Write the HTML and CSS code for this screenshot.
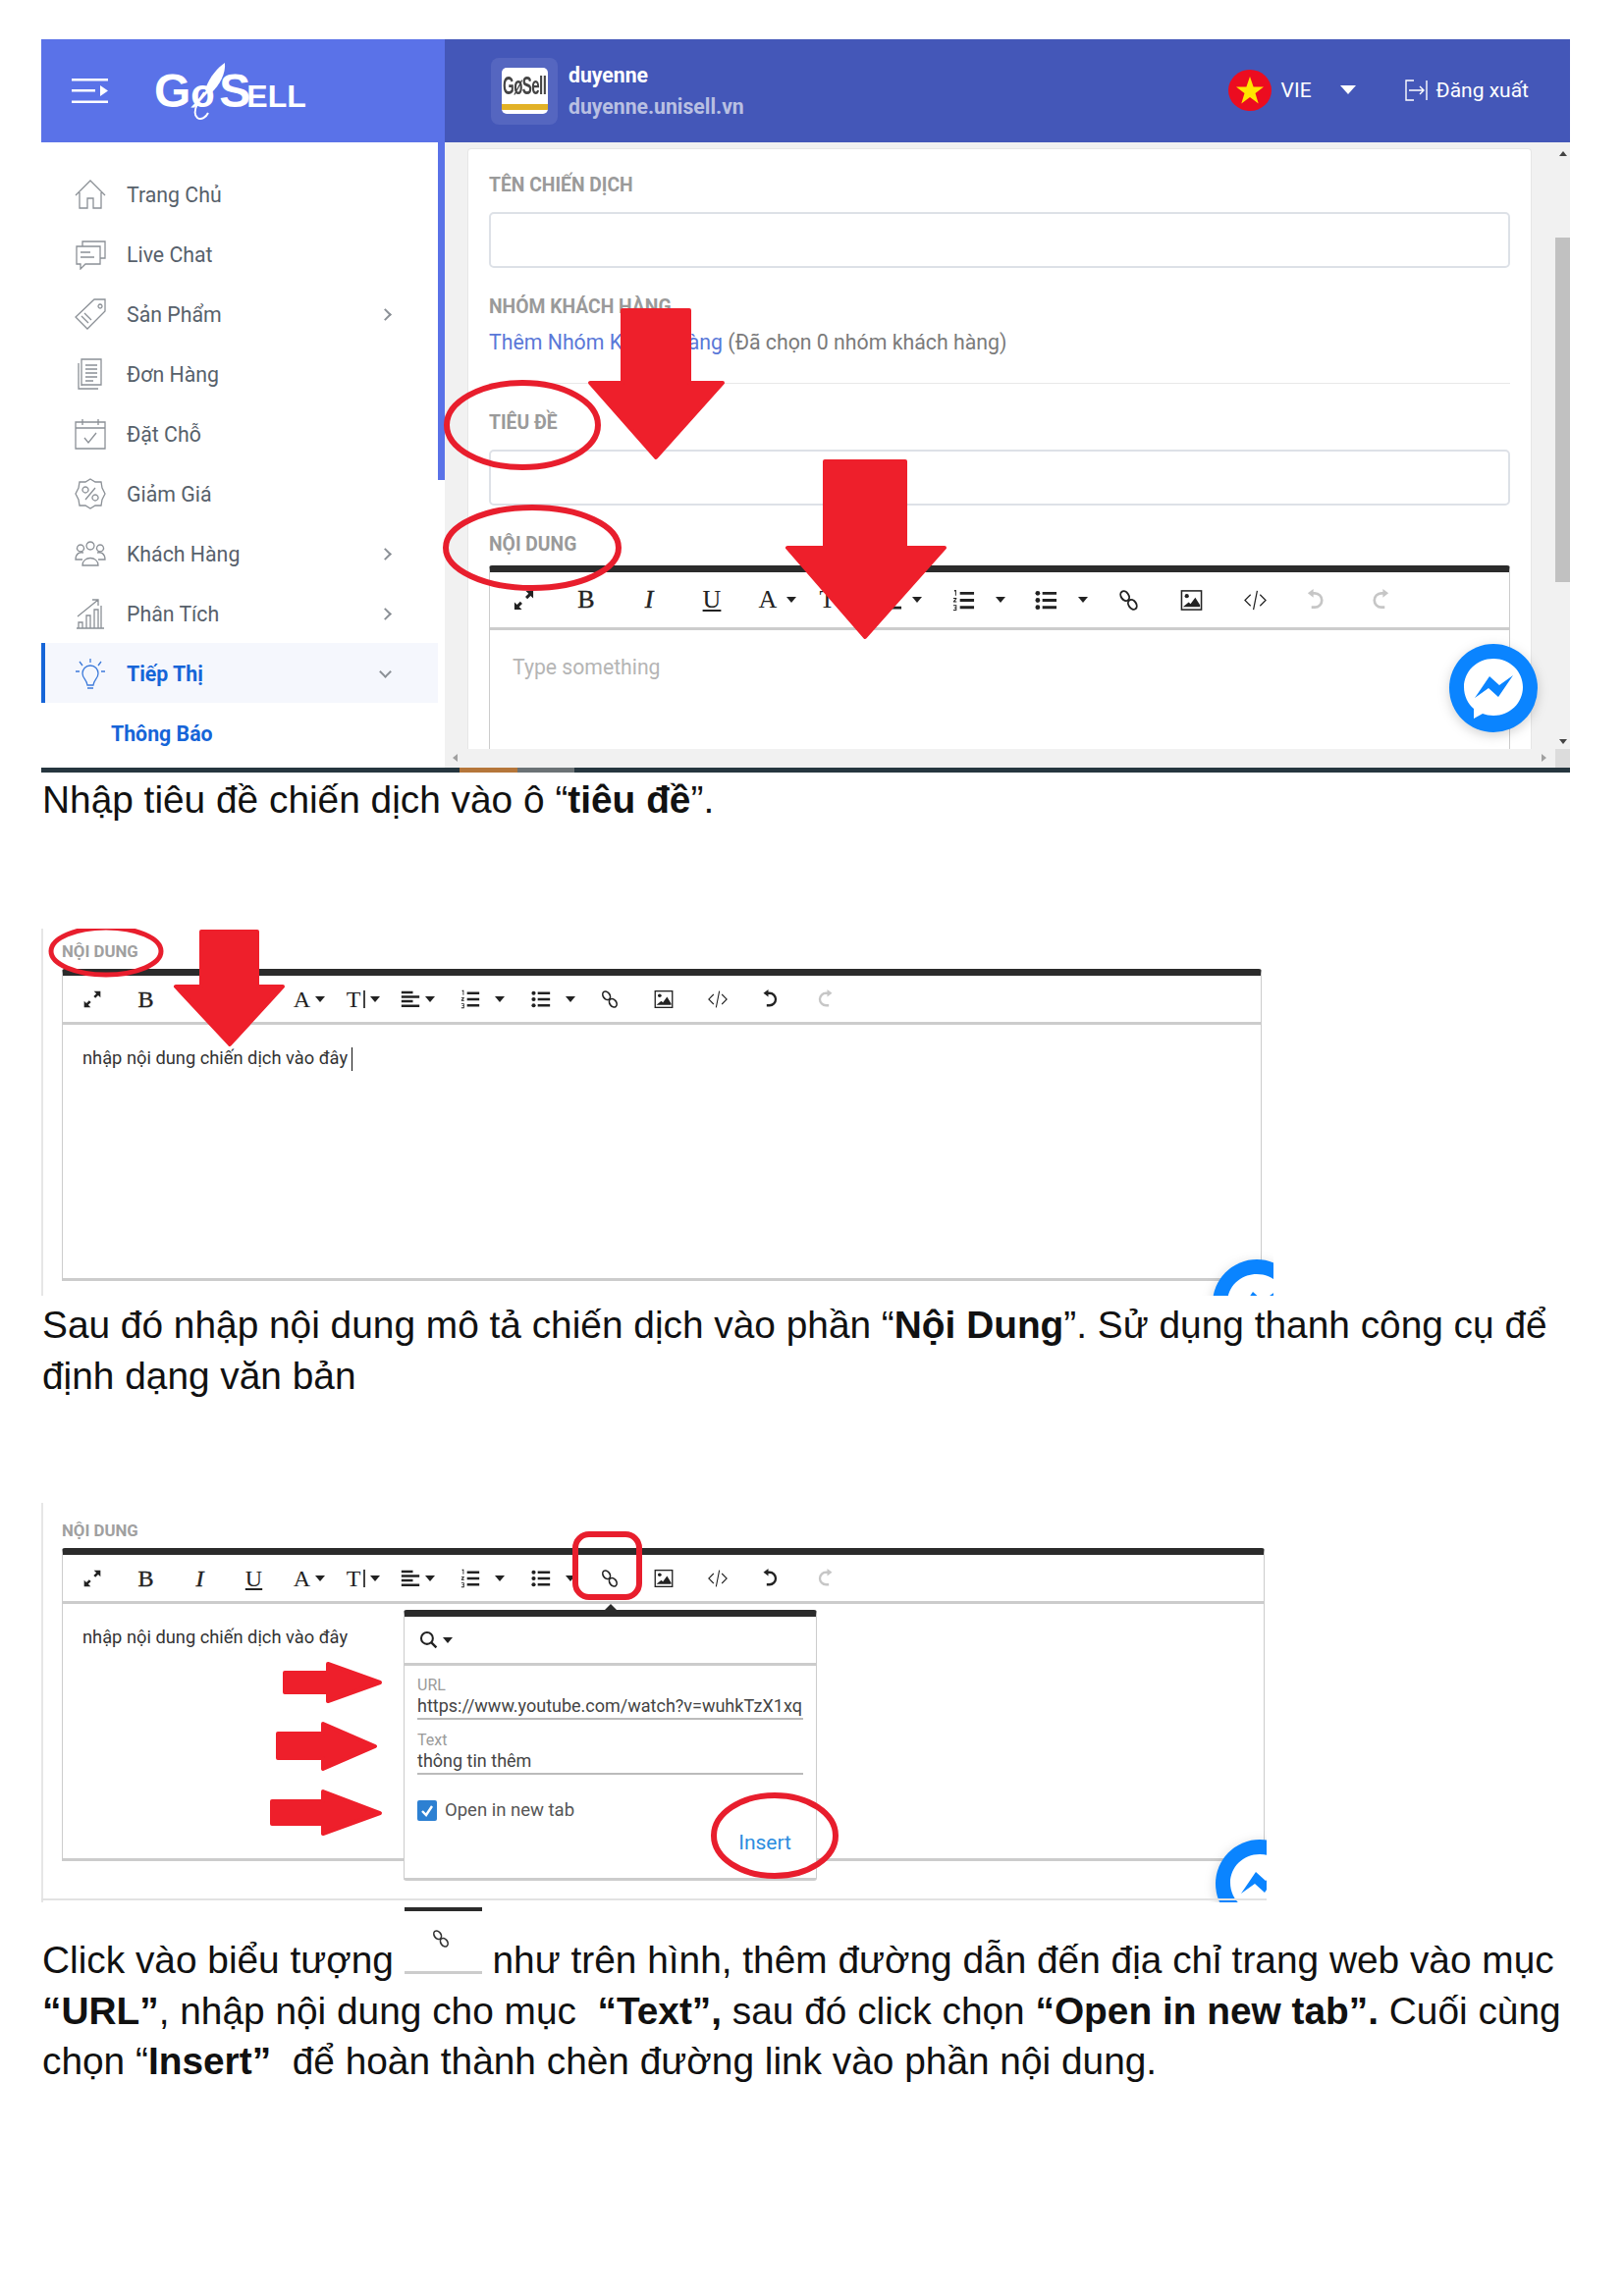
FILE: index.html
```html
<!DOCTYPE html>
<html lang="vi">
<head>
<meta charset="utf-8">
<title>GoSell hướng dẫn</title>
<link rel="stylesheet" href="styles.css">
</head>
<body>
<svg class="sprite" aria-hidden="true">
  <symbol id="i-expand" viewBox="0 0 24 24"><path d="M14 2h8v8l-2.8-2.8-3.4 3.4-2.2-2.2 3.4-3.4zM10 22H2v-8l2.8 2.8 3.4-3.4 2.2 2.2-3.4 3.4z"/></symbol>
  <symbol id="i-link" viewBox="0 0 24 24"><g fill="none" stroke="currentColor" stroke-width="2"><ellipse cx="8" cy="7.500" rx="4" ry="5.600" transform="rotate(-35 8 7.500)"/><ellipse cx="16" cy="16.500" rx="4" ry="5.600" transform="rotate(-35 16 16.500)"/></g></symbol>
  <symbol id="i-image" viewBox="0 0 24 24"><rect x="1.5" y="2" width="21" height="20" fill="none" stroke="currentColor" stroke-width="1.6"/><circle cx="7" cy="7.5" r="2.2"/><path d="M3 19l6-5 2 2 5-7 5 8v2H3z"/></symbol>
  <symbol id="i-code" viewBox="0 0 24 24"><path d="M7 6l-6 6 6 6M17 6l6 6-6 6M14 2l-4 20" fill="none" stroke="currentColor" stroke-width="1.3"/></symbol>
  <symbol id="i-undo" viewBox="0 0 24 24"><path d="M8 4.5h2.5a7.5 7.5 0 0 1 0 15H7" fill="none" stroke="currentColor" stroke-width="2.8"/><path d="M3 4.5L9 0v9z"/></symbol>
  <symbol id="i-redo" viewBox="0 0 24 24"><path d="M16 4.5h-2.5a7.5 7.5 0 0 0 0 15H17" fill="none" stroke="currentColor" stroke-width="2.8"/><path d="M21 4.5L15 0v9z"/></symbol>
  <symbol id="i-ol" viewBox="0 0 24 24"><path d="M8 3h15v3H8zM8 10.500h15v3H8zM8 18h15v3H8zM2 1h2v6H3V2.500H2zM1 9.500h3.500v1L2.500 13h2v1H1v-1l2.300-2.500H1zM1 17h3.500v6H1v-1h2.500v-1.500H2v-1h1.500V18H1z"/></symbol>
  <symbol id="i-ul" viewBox="0 0 24 24"><circle cx="3" cy="4.500" r="2.500"/><circle cx="3" cy="12" r="2.500"/><circle cx="3" cy="19.500" r="2.500"/><path d="M8 3h15v3H8zM8 10.500h15v3H8zM8 18h15v3H8z"/></symbol>
  <symbol id="i-align" viewBox="0 0 24 24"><path d="M1 2h14v3H1zM1 7.500h22v3H1zM1 13h14v3H1zM1 18.500h22v3H1z"/></symbol>
  <symbol id="i-messenger" viewBox="0 0 90 90"><circle cx="45" cy="45" r="45" fill="#0a84ff"/><path d="M45 15c-17 0-30 13-30 29 0 9 4 17 10 22v10l9-5c3 1 7 2 11 2 17 0 30-13 30-29S62 15 45 15z" fill="#fff"/><path d="M26 55l15-22 10 9 14-10-15 22-10-9z" fill="#0a84ff"/></symbol>
  <symbol id="i-search" viewBox="0 0 24 24"><circle cx="10" cy="10" r="7.500" fill="none" stroke="currentColor" stroke-width="2.600"/><path d="M15 15l7 7" stroke="currentColor" stroke-width="3"/></symbol>
</svg>

<main class="page">
  <section class="shot shot-app">
    <header class="app-header">
      <div class="brand">
        <svg class="hamburger" viewBox="0 0 37 25"><path d="M0 0h37v2.500H0zM0 11h24v2.500H0zM0 22.500h37V25H0zM29 7l8 5.500-8 5.500z" fill="#fff"/></svg>
        <div class="logo">
          <span class="logo-big">G</span><span class="logo-o">ø</span><span class="logo-big">S</span><span class="logo-small">ELL</span>
          <svg class="rocket" viewBox="0 0 40 60"><path d="M36 1c-7 5-15 13-20 27l6 4c9-9 15-20 14-31z" fill="#fff"/><path d="M15 31C8 41 2 52 8 57c4 3 9-1 11-5" fill="none" stroke="#fff" stroke-width="2"/></svg>
        </div>
      </div>
      <div class="topbar">
        <div class="store-tile">
          <div class="store-logo"><span class="store-name">GøSell</span><span class="store-strip"></span></div>
        </div>
        <div class="store-text">
          <div class="store-user">duyenne</div>
          <div class="store-url">duyenne.unisell.vn</div>
        </div>
        <div class="topbar-right">
          <svg class="flag" viewBox="0 0 44 42"><ellipse cx="22" cy="21" rx="22" ry="21" fill="#ec0c20"/><path d="M22 7l3.600 10.500H36l-8.500 6.500 3.200 10.500L22 28l-8.700 6.500L16.500 24 8 17.500h10.400z" fill="#ffe600"/></svg>
          <span class="lang">VIE</span>
          <span class="lang-caret"></span>
          <svg class="logout" viewBox="0 0 23 22"><path d="M9 1H1v20h8M22 1v20M4 11h15M15 7l4 4-4 4" fill="none" stroke="#fff" stroke-width="1.400"/></svg>
          <span class="logout-text">Đăng xuất</span>
        </div>
      </div>
    </header>
    <div class="app-body">
      <nav class="sidebar">
        <a class="nav-row"><svg class="nav-icon" viewBox="0 0 32 32"><path d="M1 17L16 2l15 15M5 14v16h8V20h6v10h8V14" /></svg><span class="nav-label">Trang Chủ</span></a>
        <a class="nav-row"><svg class="nav-icon" viewBox="0 0 32 32"><path d="M8 8V3h23v17h-5M2 8h24v18H11l-5 5v-5H2zM6 14h10M6 19h14" /></svg><span class="nav-label">Live Chat</span></a>
        <a class="nav-row"><svg class="nav-icon" viewBox="0 0 32 32"><path d="M20 1h11v12L13 31 1 19zM26 6a2 2 0 1 0 .01 0zM10 15l7 7M7 18l7 7" /></svg><span class="nav-label">Sản Phẩm</span><span class="chevron"></span></a>
        <a class="nav-row"><svg class="nav-icon" viewBox="0 0 32 32"><path d="M7 28V1h20v26H7zM4 5v26h20M11 7h12M11 11h12M11 15h12M11 19h12M11 23h8" /></svg><span class="nav-label">Đơn Hàng</span></a>
        <a class="nav-row"><svg class="nav-icon" viewBox="0 0 32 32"><path d="M1 4h30v27H1zM1 10h30M8 1v6M24 1v6M10 20l4 5 8-10" /></svg><span class="nav-label">Đặt Chỗ</span></a>
        <a class="nav-row"><svg class="nav-icon" viewBox="0 0 32 32"><path d="M16 1l5 3 6 0 1 6 3 6-3 6-1 6-6 0-5 3-5-3-6 0-1-6-3-6 3-6 1-6 6 0zM21 10L11 22M11 9a3 3 0 1 0 .01 0zM21 17a3 3 0 1 0 .01 0z" /></svg><span class="nav-label">Giảm Giá</span></a>
        <a class="nav-row"><svg class="nav-icon" viewBox="0 0 32 32"><path d="M16 4a4 4 0 1 0 .01 0zM6 7a3.500 3.500 0 1 0 .01 0zM26 7a3.500 3.500 0 1 0 .01 0zM8 28c0-10 16-10 16 0zM8 22H1c0-6 4-8 8-7M24 22h7c0-6-4-8-8-7" /></svg><span class="nav-label">Khách Hàng</span><span class="chevron"></span></a>
        <a class="nav-row"><svg class="nav-icon" viewBox="0 0 32 32"><path d="M2 31h28M4 31v-6h4v6M12 31V18h4v13M20 31V12h4v19M27 31V8M3 19L24 2M18 2h6v6" /></svg><span class="nav-label">Phân Tích</span><span class="chevron"></span></a>
        <a class="nav-row nav-active"><svg class="nav-icon" viewBox="0 0 32 32"><path d="M16 8c-5 0-8 4-8 8 0 5 4 6 5 12h6c1-6 5-7 5-12 0-4-3-8-8-8zM13 31h6M16 1v4M5 4l3 4M27 4l-3 4M1 14h4M27 14h4" /></svg><span class="nav-label">Tiếp Thị</span><span class="chevron chevron-down"></span></a>
        <a class="nav-row nav-sub"><span class="nav-label">Thông Báo</span></a>
      </nav>
      <div class="sidebar-rail"></div>
      <div class="workspace">
        <div class="work-top">
          <div class="card">
            <div class="label label-name">TÊN CHIẾN DỊCH</div>
            <div class="input"></div>
            <div class="label label-group">NHÓM KHÁCH HÀNG</div>
            <div class="group-line"><a class="group-link">Thêm Nhóm Khách Hàng</a> (Đã chọn 0 nhóm khách hàng)</div>
            <div class="divider"></div>
            <div class="label label-title">TIÊU ĐỀ</div>
            <div class="input"></div>
            <div class="label label-content">NỘI DUNG</div>
            <div class="editor editor-large">
              <div class="toolbar toolbar-large">
                <span class="tb"><svg class="ic"><use href="#i-expand"/></svg></span>
                <span class="tb tb-b">B</span>
                <span class="tb tb-i">I</span>
                <span class="tb tb-u">U</span>
                <span class="tb tb-dd"><span class="tb-letter">A</span><span class="caret"></span></span>
                <span class="tb tb-dd"><span class="tb-letter">T</span><span class="tb-size"></span><span class="caret"></span></span>
                <span class="tb tb-dd"><svg class="ic"><use href="#i-align"/></svg><span class="caret"></span></span>
                <span class="tb tb-list"><svg class="ic"><use href="#i-ol"/></svg><span class="caret"></span></span>
                <span class="tb tb-list"><svg class="ic"><use href="#i-ul"/></svg><span class="caret"></span></span>
                <span class="tb"><svg class="ic"><use href="#i-link"/></svg></span>
                <span class="tb"><svg class="ic"><use href="#i-image"/></svg></span>
                <span class="tb"><svg class="ic"><use href="#i-code"/></svg></span>
                <span class="tb tb-off"><svg class="ic"><use href="#i-undo"/></svg></span>
                <span class="tb tb-off"><svg class="ic"><use href="#i-redo"/></svg></span>
              </div>
              <div class="editor-body placeholder">Type something</div>
            </div>
          </div>
          <div class="vscroll">
            <span class="arrow-up"></span>
            <span class="thumb"></span>
            <span class="arrow-down"></span>
          </div>
        </div>
        <div class="hscroll">
          <span class="arrow-left"></span>
          <span class="arrow-right"></span>
          <span class="corner"></span>
        </div>
      </div>
    </div>
    <div class="taskbar"><span class="task-dark"></span><span class="task-orange"></span><span class="task-grey"></span><span class="task-rest"></span></div>
    <svg class="messenger messenger-app"><use href="#i-messenger"/></svg>
    <svg class="annot annot-app" viewBox="0 0 1557 747">
      <polygon class="arrow" points="592,276 660,276 660,350 694,350 626,426 559,350 592,350"/>
      <polygon class="arrow" points="798,430 880,430 880,518 920,518 839,609 760,518 798,518"/>
      <ellipse class="ring" cx="490" cy="393" rx="77" ry="43"/>
      <ellipse class="ring" cx="500" cy="518" rx="88" ry="41"/>
    </svg>
  </section>
  <p class="caption caption-one">Nhập tiêu đề chiến dịch vào ô “<b>tiêu đề</b>”.</p>

  <section class="shot shot-framed shot-content">
    <div class="label label-small">NỘI DUNG</div>
    <div class="editor editor-filled">
      <div class="toolbar toolbar-small">
        <span class="tb"><svg class="ic"><use href="#i-expand"/></svg></span>
        <span class="tb tb-b">B</span>
        <span class="tb tb-i">I</span>
        <span class="tb tb-u">U</span>
        <span class="tb tb-dd"><span class="tb-letter">A</span><span class="caret"></span></span>
        <span class="tb tb-dd"><span class="tb-letter">T</span><span class="tb-size"></span><span class="caret"></span></span>
        <span class="tb tb-dd"><svg class="ic"><use href="#i-align"/></svg><span class="caret"></span></span>
        <span class="tb tb-list"><svg class="ic"><use href="#i-ol"/></svg><span class="caret"></span></span>
        <span class="tb tb-list"><svg class="ic"><use href="#i-ul"/></svg><span class="caret"></span></span>
        <span class="tb"><svg class="ic"><use href="#i-link"/></svg></span>
        <span class="tb"><svg class="ic"><use href="#i-image"/></svg></span>
        <span class="tb"><svg class="ic"><use href="#i-code"/></svg></span>
        <span class="tb"><svg class="ic"><use href="#i-undo"/></svg></span>
        <span class="tb tb-off"><svg class="ic"><use href="#i-redo"/></svg></span>
      </div>
      <div class="editor-body filled">nhập nội dung chiến dịch vào đây<span class="text-caret"></span></div>
    </div>
    <svg class="messenger messenger-content"><use href="#i-messenger"/></svg>
    <svg class="annot annot-content" viewBox="0 0 1255 374">
      <ellipse class="ring ring-thin" cx="66" cy="23" rx="56" ry="24"/>
      <polygon class="arrow" points="163,3 220,3 220,59 246,59 192,118 137,59 163,59"/>
    </svg>
  </section>
  <p class="caption caption-two">Sau đó nhập nội dung mô tả chiến dịch vào phần “<b>Nội Dung</b>”. Sử dụng thanh công cụ để định dạng văn bản</p>

  <section class="shot shot-framed shot-link">
    <div class="label label-small">NỘI DUNG</div>
    <div class="editor editor-link">
      <div class="toolbar toolbar-small">
        <span class="tb"><svg class="ic"><use href="#i-expand"/></svg></span>
        <span class="tb tb-b">B</span>
        <span class="tb tb-i">I</span>
        <span class="tb tb-u">U</span>
        <span class="tb tb-dd"><span class="tb-letter">A</span><span class="caret"></span></span>
        <span class="tb tb-dd"><span class="tb-letter">T</span><span class="tb-size"></span><span class="caret"></span></span>
        <span class="tb tb-dd"><svg class="ic"><use href="#i-align"/></svg><span class="caret"></span></span>
        <span class="tb tb-list"><svg class="ic"><use href="#i-ol"/></svg><span class="caret"></span></span>
        <span class="tb tb-list"><svg class="ic"><use href="#i-ul"/></svg><span class="caret"></span></span>
        <span class="tb"><svg class="ic"><use href="#i-link"/></svg></span>
        <span class="tb"><svg class="ic"><use href="#i-image"/></svg></span>
        <span class="tb"><svg class="ic"><use href="#i-code"/></svg></span>
        <span class="tb"><svg class="ic"><use href="#i-undo"/></svg></span>
        <span class="tb tb-off"><svg class="ic"><use href="#i-redo"/></svg></span>
      </div>
      <div class="editor-body filled">nhập nội dung chiến dịch vào đây</div>
    </div>
    <div class="link-popup">
      <span class="popup-nub"></span>
      <div class="popup-tools"><svg class="ic-search"><use href="#i-search"/></svg><span class="caret"></span></div>
      <div class="popup-form">
        <div class="field-label">URL</div>
        <div class="field-value">https://www.youtube.com/watch?v=wuhkTzX1xq</div>
        <div class="field-label field-label-next">Text</div>
        <div class="field-value">thông tin thêm</div>
        <div class="check-row">
          <svg class="checkbox" viewBox="0 0 20 21"><rect width="20" height="21" rx="2" fill="#2d80d2"/><path d="M5 11l4 4 6-9" fill="none" stroke="#fff" stroke-width="2.400"/></svg>
          <span>Open in new tab</span>
        </div>
        <div class="insert">Insert</div>
      </div>
    </div>
    <svg class="messenger messenger-link"><use href="#i-messenger"/></svg>
    <svg class="annot annot-link" viewBox="0 0 1248 407">
      <polygon class="arrow" points="248,173 292,173 292,164 345,183 292,202 292,193 248,193"/>
      <polygon class="arrow" points="241,235 287,235 287,225 340,248 287,271 287,260 241,260"/>
      <polygon class="arrow" points="235,304 287,304 287,294 345,316 287,337 287,327 235,327"/>
      <rect class="ring" x="544" y="32" width="65" height="64" rx="14"/>
      <ellipse class="ring" cx="747" cy="339" rx="62" ry="41"/>
    </svg>
  </section>
  <p class="caption caption-three">Click vào biểu tượng <span class="inline-link"><svg class="inline-link-ic"><use href="#i-link"/></svg></span> như trên hình, thêm đường dẫn đến địa chỉ trang web vào mục <b>“URL”</b>, nhập nội dung cho mục&nbsp; <b>“Text”,</b> sau đó click chọn <b>“Open in new tab”.</b> Cuối cùng chọn “<b>Insert”</b>&nbsp; để hoàn thành chèn đường link vào phần nội dung.</p>
</main>
</body>
</html>
```

FILE: styles.css
```css
* { box-sizing: border-box; }
html, body { margin: 0; background: #fff; }
body { font-family: Roboto, "Liberation Sans", sans-serif; color: #333; }
.sprite { position: absolute; width: 0; height: 0; }
.page { width: 1654px; height: 2339px; padding: 40px 42px 0; overflow: hidden; }

/* screenshot frames */
.shot { position: relative; overflow: hidden; }
.shot-framed::before { content: ""; position: absolute; left: 0; top: 0; bottom: 0; width: 2px; background: #e6e6e6; }
.annot { position: absolute; left: 0; top: 0; pointer-events: none; }
.annot-app { width: 1557px; height: 747px; }
.annot-content { width: 1255px; height: 374px; }
.annot-link { width: 1248px; height: 407px; }
.arrow { fill: #ee1f2b; stroke: #ee1f2b; stroke-width: 4; stroke-linejoin: round; }
.ring { fill: none; stroke: #e81e2d; stroke-width: 6; }
.ring-thin { stroke-width: 5; }

/* captions */
.caption { margin: 0 0 0 1px; width: 1557px; font: 38.850px/51.600px "Liberation Sans", Arial, sans-serif; color: #111; }
.caption b { font-weight: 700; }
.caption-one { margin-top: 2px; height: 103px; margin-bottom: 54px; }
.caption-two { margin-top: 4px; height: 103px; margin-bottom: 104px; }
.caption-three { margin-top: 33px; }
.inline-link { display: inline-block; position: relative; width: 79px; height: 68px; margin-top: -40px; border-top: 4px solid #2b2b2b; border-bottom: 3px solid #ccc; vertical-align: -1px; }
.inline-link-ic { position: absolute; left: 27px; top: 18px; width: 20px; height: 20px; color: #333; }

/* app screenshot */
.shot-app { width: 1557px; height: 747px; }
.app-header { display: flex; height: 105px; color: #fff; }
.brand { display: flex; align-items: center; width: 411px; padding-left: 31px; background: #5a72e8; }
.hamburger { width: 37px; height: 25px; }
.logo { position: relative; display: flex; align-items: baseline; margin-left: 47px; height: 59px; padding-top: 4px; font-family: "Liberation Sans", sans-serif; font-weight: 700; color: #fff; }
.logo-big { font-size: 48px; line-height: 52px; }
.logo-o { font-size: 40px; line-height: 52px; width: 29px; }
.logo-small { font-size: 32px; line-height: 52px; margin-left: -4px; }
.rocket { position: absolute; left: 36px; top: 0; width: 40px; height: 60px; }
.topbar { display: flex; flex: 1; align-items: center; padding: 0 42px 0 47px; background: #4457b8; }
.store-tile { display: flex; align-items: center; justify-content: center; width: 68px; height: 68px; border-radius: 8px; background: #5566c0; }
.store-logo { display: flex; flex-direction: column; align-items: center; width: 47px; height: 47px; border-radius: 5px; background: #fff; overflow: hidden; }
.store-name { font: 700 26px/37px "Liberation Sans", sans-serif; letter-spacing: -1px; color: #444; transform: scaleX(.58); white-space: nowrap; }
.store-strip { width: 47px; height: 6px; background: #e2b126; }
.store-text { margin-left: 11px; }
.store-user { font-size: 21.200px; font-weight: 700; line-height: 30px; color: #fff; }
.store-url { margin-top: 2px; font-size: 21.200px; font-weight: 700; line-height: 30px; color: #b9c0e2; }
.topbar-right { display: flex; align-items: center; margin-left: auto; margin-top: -2px; }
.flag { width: 44px; height: 42px; }
.lang { margin-left: 10px; font-size: 21px; }
.lang-caret { margin-left: 29px; width: 0; height: 0; border-style: solid; border-width: 9px 8px 0; border-color: #fff transparent transparent; }
.logout { width: 23px; height: 22px; margin-left: 50px; }
.logout-text { margin-left: 9px; font-size: 21px; }

.app-body { display: flex; height: 637px; }
.sidebar { width: 404px; padding-top: 22px; background: #fff; }
.nav-row { display: flex; align-items: center; height: 61px; padding: 2px 49px 0 34px; color: #57616b; font-size: 21.300px; }
.nav-icon { flex: none; width: 32px; height: 32px; margin-top: -2px; fill: none; stroke: #8b9096; stroke-width: 1.300; }
.nav-label { margin-left: 21px; }
.chevron { margin-left: auto; width: 9px; height: 9px; border-top: 2px solid #8b9096; border-right: 2px solid #8b9096; transform: rotate(45deg); }
.chevron-down { transform: rotate(135deg); margin-top: -4px; }
.nav-active { border-left: 4px solid #1665d8; padding-left: 30px; background: #f5f7fd; color: #1665d8; font-weight: 700; }
.nav-active .nav-icon { stroke: #3c7ada; }
.nav-sub { padding-left: 71px; color: #1665d8; font-weight: 700; }
.nav-sub .nav-label { margin-left: 0; }
.sidebar-rail { align-self: flex-start; width: 7px; height: 344px; background: #5a72e8; }
.workspace { display: flex; flex-direction: column; flex: 1; background: #f1f1f1; }
.work-top { display: flex; flex: 1; min-height: 0; }
.card { width: 1084px; margin: 6px 24px 0 23px; padding: 26px 21px 0 21px; background: #fff; border: 1px solid #e6e6e6; border-bottom: 0; border-radius: 4px 4px 0 0; overflow: hidden; }
.label { height: 20px; font-size: 19.300px; font-weight: 700; line-height: 22px; color: #9a9a9a; }
.label-group { margin-top: 29px; }
.label-title { margin-top: 29px; }
.label-content { margin-top: 29px; }
.input { height: 57px; margin-top: 18px; border: 2px solid #dde1e7; border-radius: 5px; background: #fff; }
.group-line { height: 28px; margin-top: 12px; font-size: 21.300px; line-height: 29px; color: #7b7b7b; }
.group-link { color: #5a78d8; }
.divider { height: 1px; margin-top: 28px; background: #e8e8e8; }
.vscroll { position: relative; width: 15px; background: #f1f1f1; }
.thumb { position: absolute; left: 0; top: 97px; width: 15px; height: 351px; background: #c1c1c1; }
.arrow-up, .arrow-down { position: absolute; left: 4px; width: 0; height: 0; border-style: solid; border-color: transparent; }
.arrow-up { top: 9px; border-width: 0 4px 5px; border-bottom-color: #444; }
.arrow-down { bottom: 5px; border-width: 5px 4px 0; border-top-color: #444; }
.hscroll { position: relative; height: 19px; background: #f1f1f1; }
.arrow-left, .arrow-right { position: absolute; top: 5px; width: 0; height: 0; border-style: solid; border-color: transparent; }
.arrow-left { left: 8px; border-width: 4px 5px 4px 0; border-right-color: #a0a0a0; }
.arrow-right { right: 24px; border-width: 4px 0 4px 5px; border-left-color: #a0a0a0; }
.corner { position: absolute; right: 0; top: 0; width: 15px; height: 19px; background: #dcdcdc; }
.taskbar { display: flex; height: 5px; }
.task-dark { width: 426px; background: #26363f; }
.task-orange { width: 59px; background: #b5763a; }
.task-grey { width: 58px; background: #6b7275; }
.task-rest { flex: 1; background: #26363f; }

/* summernote-like editor */
.editor { border-left: 1px solid #ccc; border-right: 1px solid #ccc; border-top: 7px solid #2b2b2b; border-radius: 3px 3px 0 0; background: #fff; }
.editor-large { margin-top: 12px; }
.toolbar { display: grid; align-items: center; border-bottom: 3px solid #ccc; color: #222; }
.toolbar-large { height: 59px; padding-left: 2px; grid-template-columns: 64px 64px 64px 64px 70px 56px 68px 92px 76px 60px 68px 62px 62px 68px; --letter: 26px; --ic: 23px; --dd: 10px; --list: 21px; }
.toolbar-small { height: 50px; padding-left: 2px; grid-template-columns: 55px 55px 55px 55px 58px 52px 58px 74px 70px 46px 64px 46px 62px 48px; --letter: 24px; --ic: 20px; --dd: 5px; --list: 15px; }
.tb { display: flex; align-items: center; justify-content: center; font: var(--letter)/1 "Liberation Serif", serif; fill: #222; }
.tb-b { font-weight: 400; -webkit-text-stroke: .4px #222; }
.tb-i { font-style: italic; -webkit-text-stroke: .4px #222; }
.tb-u { text-decoration: underline; }
.tb-off { color: #c6c6c6; fill: #c6c6c6; }
.ic { width: var(--ic); height: var(--ic); }
.tb-dd .caret { margin-left: var(--dd); }
.tb-list .caret { margin-left: var(--list); }
.tb-size { width: 2px; height: 18px; margin-left: 3px; background: #444; }
.caret { width: 0; height: 0; border-style: solid; border-width: 6px 5px 0; border-color: #222 transparent transparent; }
.editor-body { padding: 0 20px; }
.placeholder { height: 200px; padding: 25px 23px 0; font-size: 21.200px; line-height: 26px; color: #b5b5b5; }
.filled { padding-top: 22px; font-size: 18.300px; line-height: 24px; color: #333; }
.text-caret { display: inline-block; width: 1px; height: 24px; margin-left: 4px; background: #111; vertical-align: middle; }
.messenger { position: absolute; width: 90px; height: 90px; filter: drop-shadow(0 3px 6px rgba(0,0,0,.18)); }
.messenger-app { left: 1434px; top: 616px; }

/* second and third screenshots */
.shot-content { width: 1255px; height: 374px; padding: 13px 0 0 21px; }
.label-small { font-size: 16.800px; line-height: 20px; color: #a0a0a0; }
.editor-filled { width: 1222px; margin-top: 8px; height: 318px; border-bottom: 3px solid #ccc; }
.messenger-content { left: 1193px; top: 337px; }
.shot-link { width: 1248px; height: 407px; padding: 18px 0 0 21px; }
.shot-link::after { content: ""; position: absolute; left: 0; right: 0; top: 403px; height: 2px; background: #e2e2e2; }
.editor-link { width: 1225px; margin-top: 8px; height: 319px; border-bottom: 3px solid #ccc; }
.messenger-link { left: 1196px; top: 343px; }
.link-popup { position: absolute; left: 369px; top: 109px; width: 421px; height: 276px; background: #fff; border: 1px solid #ccc; border-top: 7px solid #2b2b2b; border-bottom: 3px solid #ccc; border-radius: 3px; }
.popup-nub { position: absolute; left: 204px; top: -13px; width: 0; height: 0; border-style: solid; border-width: 0 6px 6px; border-color: transparent transparent #2b2b2b; }
.popup-tools { display: flex; align-items: center; height: 50px; padding-left: 15px; border-bottom: 3px solid #ccc; }
.ic-search { width: 19px; height: 21px; color: #222; }
.popup-tools .caret { margin-left: 5px; }
.popup-form { position: relative; padding: 10px 13px 0; }
.field-label { font-size: 16px; line-height: 20px; color: #9a9a9a; }
.field-label-next { margin-top: 11px; }
.field-value { height: 25px; overflow: hidden; white-space: nowrap; font-size: 18px; line-height: 22px; color: #444; border-bottom: 2px solid #bbb; }
.check-row { display: flex; align-items: center; margin-top: 25px; font-size: 18.500px; color: #555; }
.checkbox { width: 20px; height: 21px; margin-right: 8px; }
.insert { position: absolute; right: 25px; top: 168px; font-size: 21px; color: #2b8de0; }
```
